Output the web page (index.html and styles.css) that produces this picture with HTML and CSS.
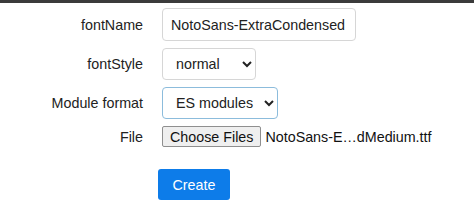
FILE: index.html
```html
<!DOCTYPE html>
<html lang="en">
<head>
  <meta charset="UTF-8">
  <title>Font converter</title>
  <link rel="stylesheet" href="styles.css">
</head>
<body>
  <div class="topbar"></div>

  <form class="settings">
    <label class="field-label" for="font-name">fontName</label>
    <input type="text" id="font-name" class="text-input" value="NotoSans-ExtraCondensed">

    <label class="field-label" for="font-style">fontStyle</label>
    <select id="font-style" class="select select-style">
      <option>normal</option>
      <option>italic</option>
    </select>

    <label class="field-label" for="module-format">Module format</label>
    <select id="module-format" class="select select-module focused">
      <option>ES modules</option>
      <option>CommonJS</option>
    </select>

    <span class="field-label">File</span>
    <div class="file-row">
      <button type="button" class="file-button">Choose Files</button>
      <span class="file-name">NotoSans-E…dMedium.ttf</span>
    </div>

    <div class="actions">
      <button type="button" class="create-button">Create</button>
    </div>
  </form>
</body>
</html>
```

FILE: styles.css
```css
body {
  margin: 0;
  font-family: Arial, "Liberation Sans", sans-serif;
  font-size: 14.3px;
  color: #222;
  background: #fff;
}
.topbar {
  height: 3px;
  background: #3b3b3b;
}
.settings {
  display: grid;
  grid-template-columns: 143px auto;
  column-gap: 19px;
  row-gap: 7px;
  align-items: center;
  justify-items: start;
  padding-top: 5px;
}
.field-label {
  justify-self: end;
  color: #222;
}
.text-input,
.select {
  box-sizing: border-box;
  font-family: inherit;
  font-size: 14.3px;
  color: #222;
  background: #fff;
  border: 1px solid #d6d6d6;
  border-radius: 4px;
}
.text-input {
  width: 194px;
  height: 33px;
  padding: 0 8px;
}
.select {
  height: 32px;
  padding: 0 3px 0 9px;
}
.select-style {
  width: 94px;
}
.select-module {
  width: 116px;
}
.select.focused {
  border-color: #8cbcdc;
}
.file-row {
  display: flex;
  align-items: center;
  gap: 4px;
}
.file-button {
  box-sizing: border-box;
  height: 21px;
  padding: 0 7px;
  font-family: inherit;
  font-size: 14.3px;
  color: #111;
  background: #efefef;
  border: 1px solid #8f8f8f;
  border-radius: 2px;
}
.file-name {
  color: #111;
}
.actions {
  grid-column: 2;
  margin-top: 15px;
  margin-left: -4px;
}
.create-button {
  height: 31px;
  width: 72px;
  font-family: inherit;
  font-size: 14.3px;
  color: #fff;
  background: #0d7ce9;
  border: none;
  border-radius: 3px;
}
```
